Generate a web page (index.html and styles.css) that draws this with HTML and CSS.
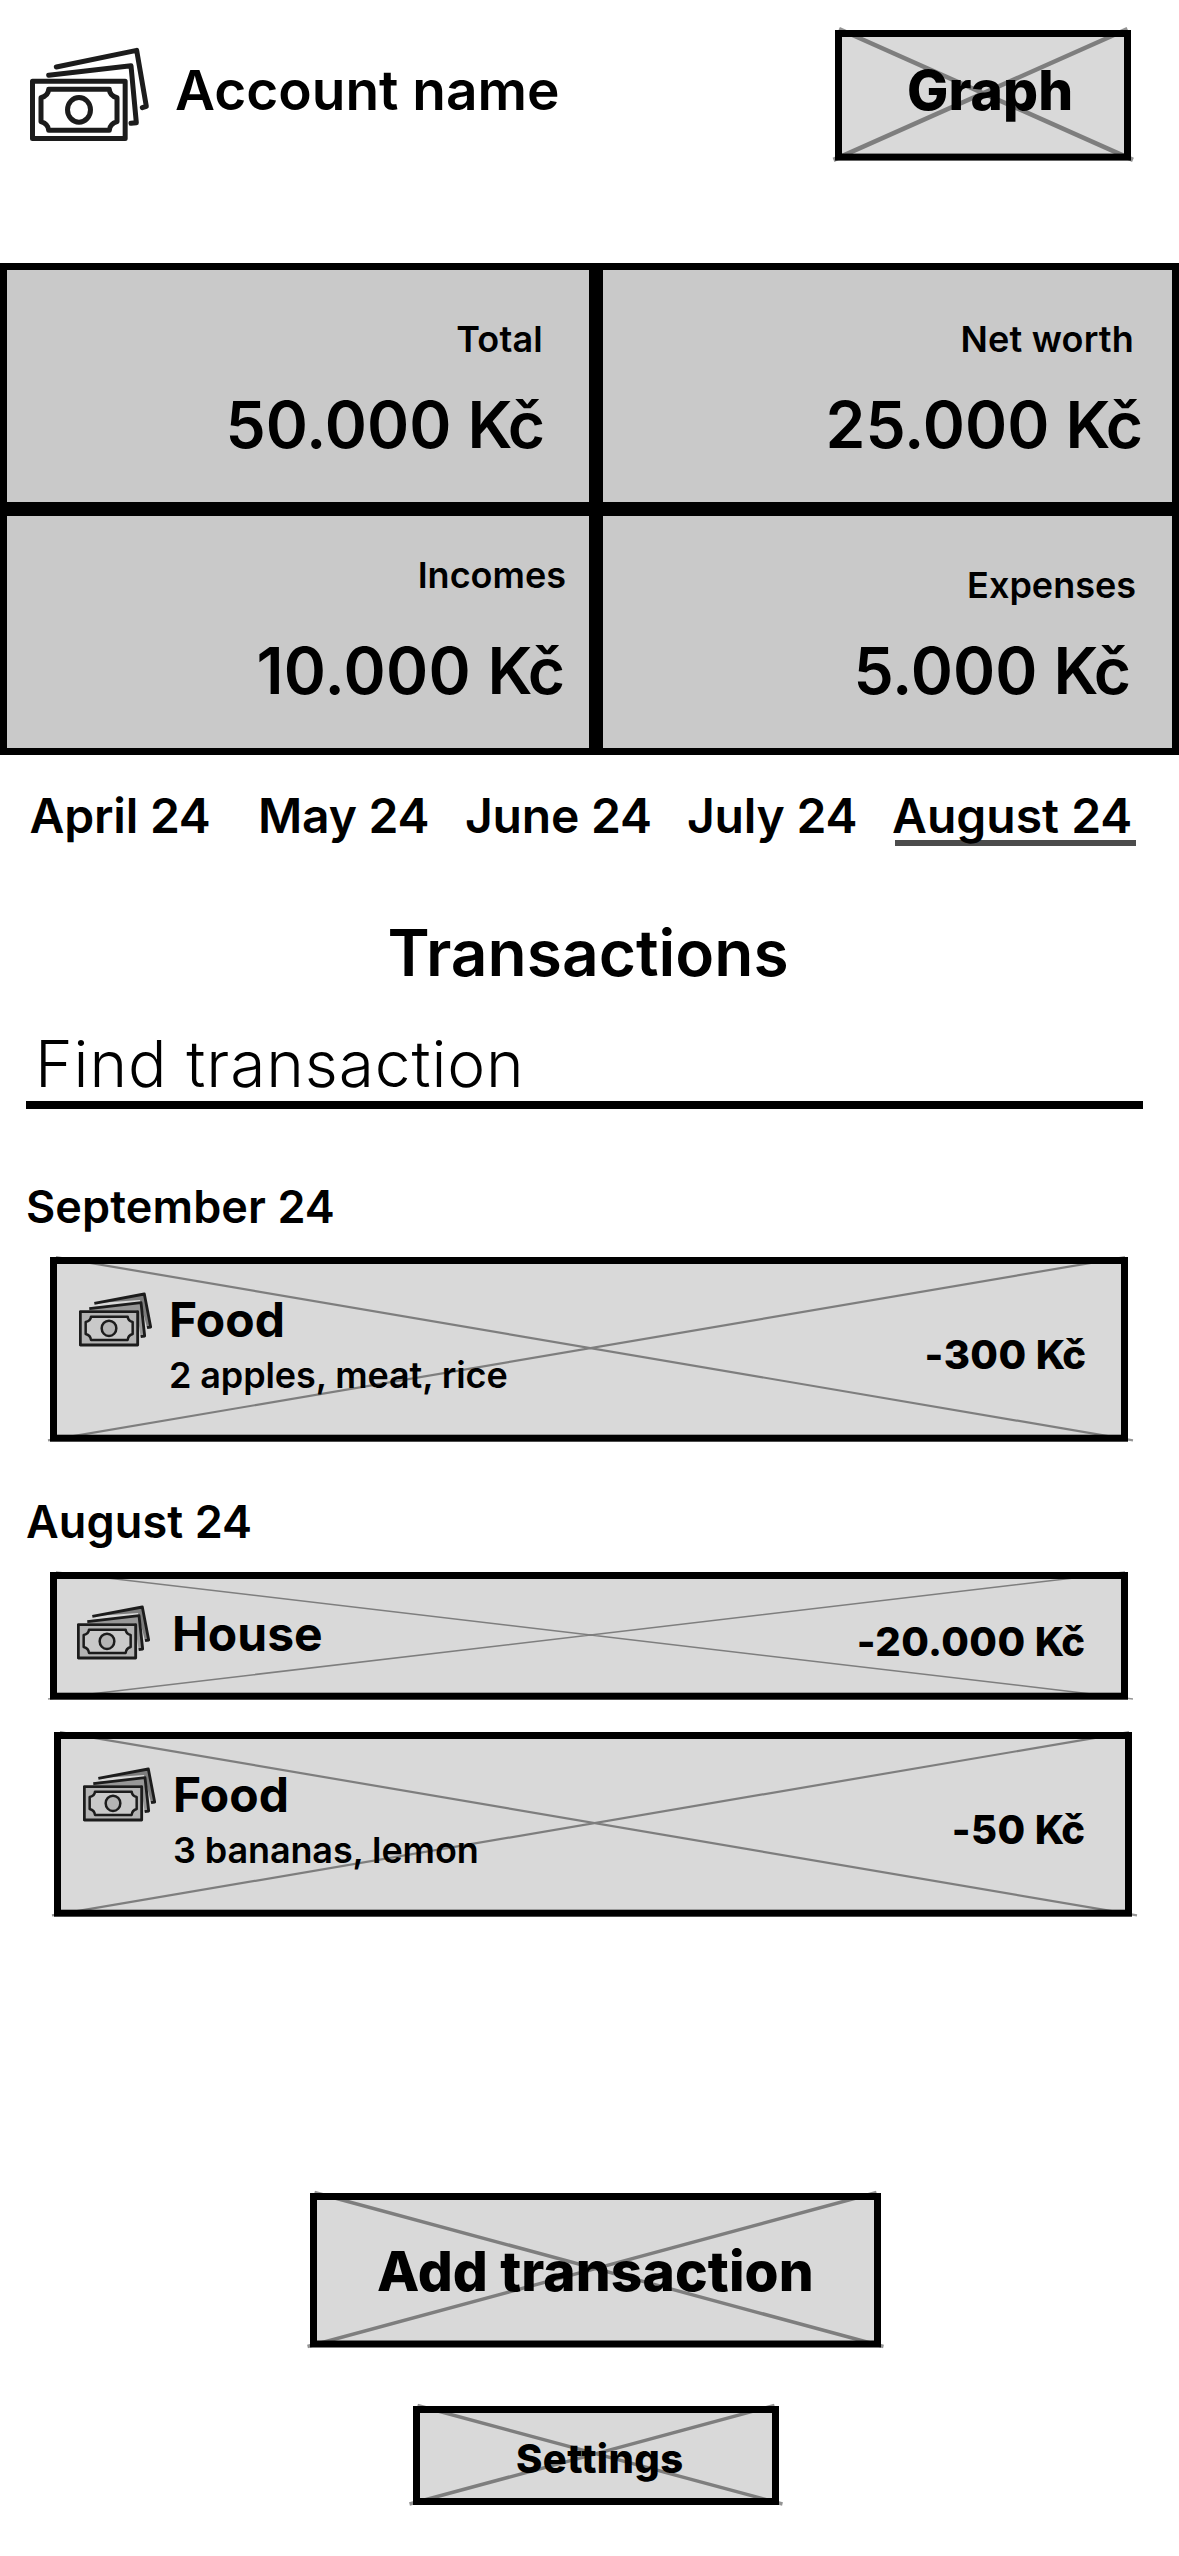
FILE: index.html
```html
<!DOCTYPE html>
<html lang="en">
<head>
<meta charset="utf-8">
<title>Account overview</title>
<link rel="stylesheet" href="styles.css">
</head>
<body>
<svg class="symbols" aria-hidden="true">
  <symbol id="bills" viewBox="117 126 222 165">
    <path d="M163 160L313 132L332 231L321 233L300 150Z" fill="#7d7d7d"/>
    <path d="M148 172L303 158L314 258L302 260L290 180L148 181Z" fill="#979797"/>
    <path d="M163 160L313 132L332 231L321 233M148 176L303 158L314 258L302 260" fill="none" stroke="#1c1c1c" stroke-width="8.500" stroke-linejoin="round"/>
    <rect x="121" y="185" width="172" height="100" fill="#b4b4b4" stroke="#1c1c1c" stroke-width="8.500" stroke-linejoin="round"/>
    <path d="M153 200H263Q264 213 278 216V252Q264 256 263 270H153Q152 256 137 252V216Q152 213 153 200Z" fill="#c9c9c9" stroke="#1c1c1c" stroke-width="7.500" stroke-linejoin="round"/>
    <ellipse cx="207" cy="235" rx="22" ry="23" fill="#b4b4b4" stroke="#1c1c1c" stroke-width="7.500"/>
  </symbol>
</svg>

<header class="header">
  <svg class="header-icon" viewBox="0 0 420 330" fill="none" stroke="#1c1c1c" stroke-width="15" stroke-linejoin="round" stroke-linecap="round">
    <path d="M109 81L350 31L379 199L367 203"/>
    <path d="M86 106L333 77L349 248L333 250"/>
    <rect x="37.500" y="123.500" width="278" height="172"/>
    <path d="M86 148H268Q269 167 291 173V245Q269 252 268 271H86Q85 252 63 245V173Q85 167 86 148Z"/>
    <ellipse cx="177" cy="209.500" rx="34.500" ry="37"/>
  </svg>
  <h1 class="account-name">Account name</h1>
  <button class="frame graph">
    <svg class="cross" viewBox="0 0 296 131">
      <rect class="fill" x="3.500" y="3.500" width="289" height="123.600"/>
      <path class="lines w-thick" d="M4 -1L298 129.900M292.500 -1L-1.500 129.900"/>
      <rect class="edge" x="3.500" y="3.500" width="289" height="123.600"/>
    </svg>
    <span class="label-lg">Graph</span>
  </button>
</header>

<section class="summary">
  <div class="card total"><div class="card-label">Total</div><div class="card-amount">50.000 <span class="unit">Kč</span></div></div>
  <div class="card net"><div class="card-label">Net worth</div><div class="card-amount">25.000 <span class="unit">Kč</span></div></div>
  <div class="card incomes"><div class="card-label">Incomes</div><div class="card-amount">10.000 <span class="unit">Kč</span></div></div>
  <div class="card expenses"><div class="card-label">Expenses</div><div class="card-amount">5.000 <span class="unit">Kč</span></div></div>
</section>

<nav class="months">
  <a class="month">April 24</a>
  <a class="month">May 24</a>
  <a class="month">June 24</a>
  <a class="month">July 24</a>
  <a class="month active">August 24</a>
</nav>

<main>
  <h2 class="title">Transactions</h2>
  <div class="search">Find transaction</div>

  <section class="group">
    <h3 class="group-name">September 24</h3>
    <article class="frame row tall">
      <svg class="cross" viewBox="0 0 1078 185">
        <rect class="fill" x="3.500" y="3.500" width="1071" height="177.700"/>
        <path class="lines w-thin" d="M6 0.100L1083 183.400M1075 0.100L-2 183.400"/>
        <rect class="edge" x="3.500" y="3.500" width="1071" height="177.700"/>
      </svg>
      <svg class="row-icon"><use href="#bills"/></svg>
      <div class="row-text"><div class="row-name">Food</div><div class="row-note">2 apples, meat, rice</div></div>
      <div class="row-amount">-300 <span class="unit">Kč</span></div>
    </article>
  </section>

  <section class="group">
    <h3 class="group-name">August 24</h3>
    <article class="frame row short">
      <svg class="cross" viewBox="0 0 1078 128">
        <rect class="fill" x="3.500" y="3.500" width="1071" height="120.700"/>
        <path class="lines w-hair" d="M6 0L1083 126.900M1075 0L-2 126.900"/>
        <rect class="edge" x="3.500" y="3.500" width="1071" height="120.700"/>
      </svg>
      <svg class="row-icon"><use href="#bills"/></svg>
      <div class="row-text"><div class="row-name">House</div></div>
      <div class="row-amount">-20.000 <span class="unit">Kč</span></div>
    </article>
    <article class="frame row tall shifted">
      <svg class="cross" viewBox="0 0 1078 185">
        <rect class="fill" x="3.500" y="3.500" width="1071" height="177.700"/>
        <path class="lines w-thin" d="M6 0.100L1083 183.400M1075 0.100L-2 183.400"/>
        <rect class="edge" x="3.500" y="3.500" width="1071" height="177.700"/>
      </svg>
      <svg class="row-icon"><use href="#bills"/></svg>
      <div class="row-text"><div class="row-name">Food</div><div class="row-note">3 bananas, lemon</div></div>
      <div class="row-amount">-50 <span class="unit">Kč</span></div>
    </article>
  </section>
</main>

<footer class="actions">
  <button class="frame add">
    <svg class="cross" viewBox="0 0 571 155">
      <rect class="fill" x="3.500" y="3.500" width="564" height="147.500"/>
      <path class="lines w-mid" d="M4.500 -0.500L573.500 153.500M566.500 -0.500L-2.500 153.500"/>
      <rect class="edge" x="3.500" y="3.500" width="564" height="147.500"/>
    </svg>
    <span class="label-lg">Add transaction</span>
  </button>
  <button class="frame settings">
    <svg class="cross" viewBox="0 0 366 99">
      <rect class="fill" x="3.500" y="3.500" width="359" height="92"/>
      <path class="lines w-mid" d="M4.500 -0.500L369.500 98M361.500 -0.500L-3.500 98"/>
      <rect class="edge" x="3.500" y="3.500" width="359" height="92"/>
    </svg>
    <span class="label-sm">Settings</span>
  </button>
</footer>
</body>
</html>
```
FILE: styles.css
```css
* { box-sizing: border-box; }

body {
  margin: 0;
  width: 1179px;
  min-height: 2556px;
  background: #fff;
  color: #000;
  font-family: Inter, "Liberation Sans", sans-serif;
  font-weight: 600;
  line-height: normal;
}

h1, h2, h3 { margin: 0; font-weight: 600; }
.symbols { display: none; }

/* Crossed placeholder frame shared by buttons and rows */
.frame {
  position: relative;
  display: flex;
  align-items: flex-start;
  margin: 0;
  padding: 0;
  border: 0;
  background: none;
  color: inherit;
  font: inherit;
  white-space: nowrap;
}
.frame > * { position: relative; flex: none; }
.frame > .cross {
  position: absolute;
  inset: 0;
  width: 100%;
  height: 100%;
  overflow: visible;
}
.fill { fill: #d9d9d9; }
.edge { fill: none; stroke: #000; stroke-width: 7; }
.lines { fill: none; stroke: #000; stroke-opacity: .42; }
.w-thick { stroke-width: 4.500px; }
.w-mid { stroke-width: 3.400px; }
.w-thin { stroke-width: 2.200px; }
.w-hair { stroke-width: 1.500px; }

.label-lg { font-size: 55px; font-weight: 800; letter-spacing: .1px; }
.label-sm { font-size: 40px; font-weight: 800; letter-spacing: .35px; }

/* Currency letters sit tighter than the digits */
.unit { letter-spacing: -.035em; margin-right: .035em; }

/* Header */
.header {
  display: flex;
  align-items: flex-start;
  height: 263px;
  padding: 30px 48px 0 20px;
}
.header-icon { width: 140px; height: 110px; margin-top: 10px; }
.account-name { margin: 27px 0 0 15px; font-size: 55px; letter-spacing: 0; }
.graph { width: 296px; height: 131px; margin-left: auto; padding: 27px 0 0 72px; }

/* Summary */
.summary {
  display: grid;
  grid-template-columns: 596px 583px;
  grid-template-rows: 246px 246px;
}
.card {
  border: 7px solid #000;
  background: #c9c9c9;
  padding-top: 47px;
  text-align: right;
}
.card-label { font-size: 36px; line-height: 44px; }
.card-amount { margin-top: 25px; font-size: 64px; line-height: 77px; }
.total { padding-right: 44px; }
.total .card-label { margin-right: 2px; letter-spacing: .2px; }
.net { padding-right: 29px; }
.net .card-label { margin-right: 9px; letter-spacing: .2px; }
.incomes { padding: 37px 23px 0 0; }
.incomes .card-amount { margin: 35px 1px 0 0; letter-spacing: .3px; }
.incomes .unit { letter-spacing: -.035em; }
.expenses { padding-right: 36px; }
.expenses .card-amount { margin-right: 5px; }

/* Month tabs */
.months {
  display: grid;
  grid-template-columns: 228.500px 207px 222px 205px auto;
  height: 90px;
  padding: 31px 0 0 29.500px;
}
.month { position: relative; font-size: 48px; line-height: 59px; letter-spacing: -.2px; }
.active { letter-spacing: 0; }
.active::after {
  content: "";
  position: absolute;
  left: 3px;
  top: 54px;
  width: 241px;
  height: 6px;
  background: rgba(0, 0, 0, .7);
}

/* Transactions */
.title {
  margin-top: 69px;
  padding-right: 3px;
  font-size: 64px;
  line-height: 77px;
  text-align: center;
}
.search {
  width: 1117px;
  margin: 35px 0 0 26px;
  padding-left: 9px;
  border-bottom: 8px solid #000;
  font-size: 64px;
  font-weight: 330;
  line-height: 75px;
  letter-spacing: .9px;
}
.group-name { margin: 0 0 23px 26px; font-size: 45px; line-height: 55px; letter-spacing: .1px; }
.group { padding-top: 70px; }
.group + .group { padding-top: 52px; }

.row { width: 1078px; margin-left: 50px; }
.row-icon { width: 74px; height: 55px; margin-top: 35px; }
.row-text { margin: 33px 0 0 16px; }
.row-name { font-size: 48px; font-weight: 700; line-height: 59px; }
.row-note { margin-top: 4px; font-size: 36px; line-height: 44px; letter-spacing: -.12px; }
.row-amount { margin: 73px 0 0 auto; font-size: 40px; font-weight: 850; line-height: 49px; letter-spacing: .4px; }
.tall { height: 185px; padding: 0 42px 0 29px; }
.short { height: 128px; padding: 0 43px 0 27px; }
.short .row-icon { margin-top: 33px; }
.short .row-text { margin: 32px 0 0 21px; }
.short .row-amount { margin-top: 45px; }
.shifted { margin: 32px 0 0 54px; padding-right: 47px; }

/* Bottom actions */
.actions { padding-top: 276px; }
.add { width: 571px; height: 155px; margin-left: 310px; padding: 45px 0 0 67px; }
.settings { width: 366px; height: 99px; margin: 58px 0 0 413px; padding: 28px 0 0 103px; }
```
